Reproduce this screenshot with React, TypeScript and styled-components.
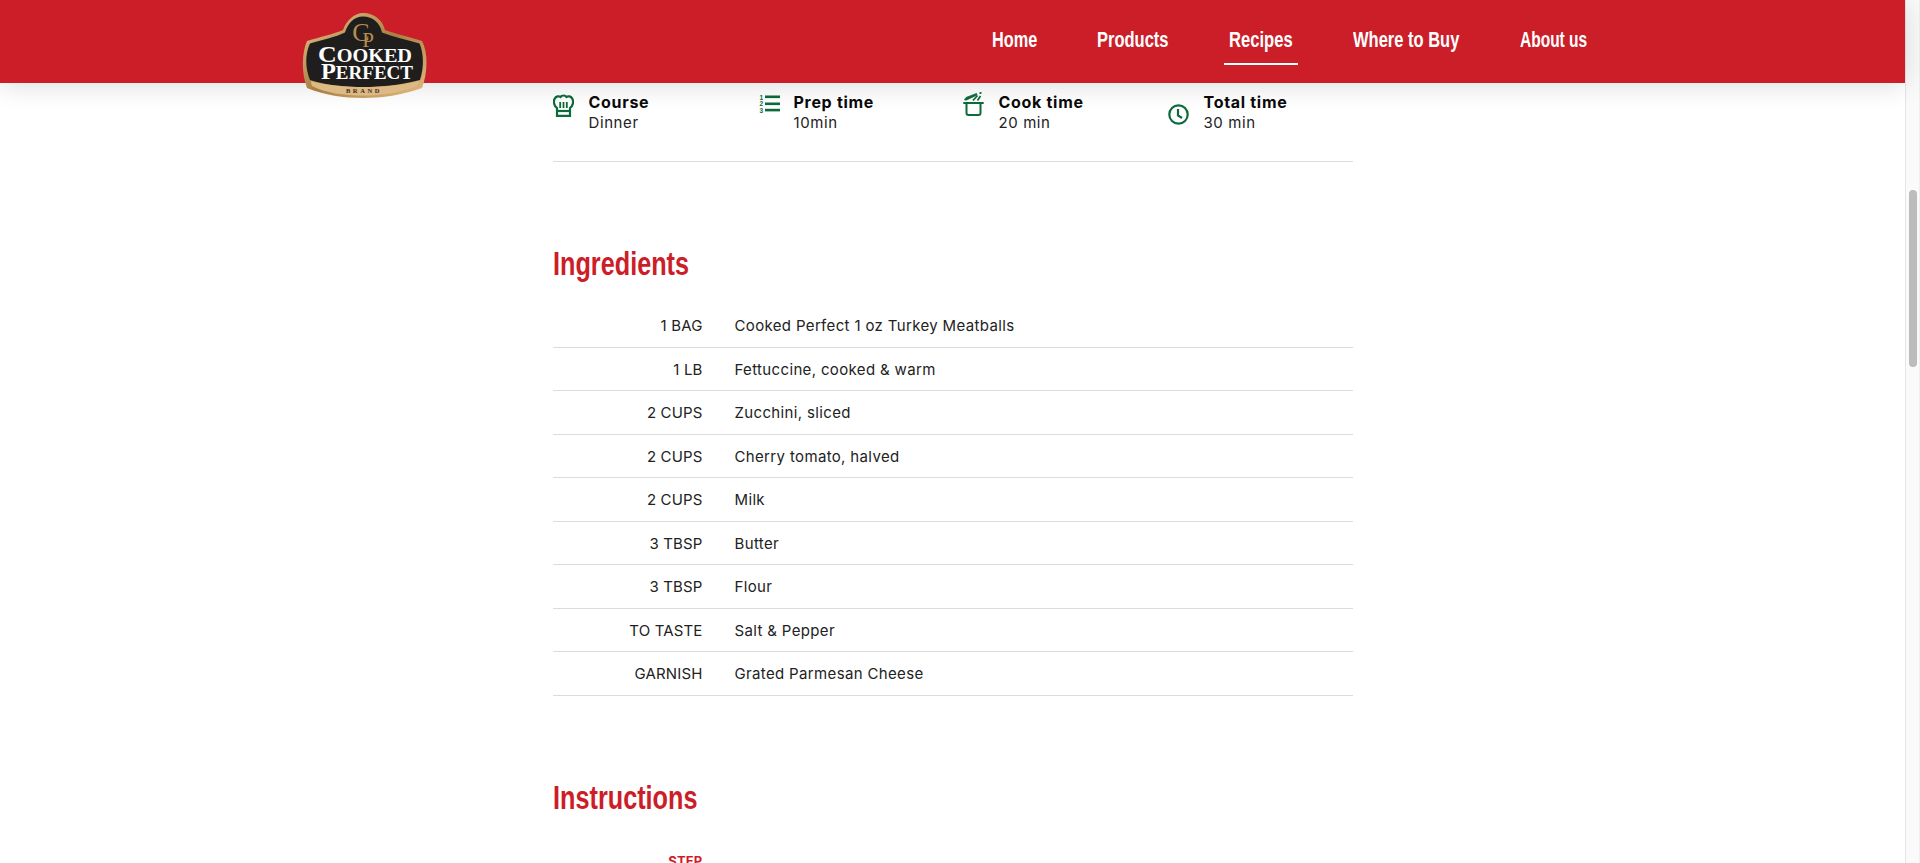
import React from "react";
import styled, { createGlobalStyle } from "styled-components";

const Global = createGlobalStyle`
  html, body { margin: 0; height: 100%; overflow: hidden; background: #fff; }
  #root { height: 100%; }
`;

const RED = "#cb1e28";
const GREEN = "#0d6b3b";
const CONDENSED = `"Liberation Sans", Arial, sans-serif`;
const BODY = `Inter, "Noto Sans", sans-serif`;
const SERIF = `"Liberation Serif", serif`;

const Viewport = styled.div`
  display: flex;
  height: 863px;
  overflow: hidden;
  color: #111;
  font-family: ${BODY};
`;
const Page = styled.div`
  flex: 1;
  min-width: 0;
  position: relative;
`;
const Rail = styled.div`
  width: 15px;
  box-sizing: border-box;
  padding: 190px 2px 0 3px;
  background: #fafafa;
  border-left: 1px solid #e6e6e6;
  border-right: 1px solid #efefef;
`;
const Thumb = styled.div`
  height: 177px;
  border-radius: 4px;
  background: #bcbcbc;
`;
const Header = styled.header`
  position: relative;
  z-index: 2;
  height: 83px;
  box-sizing: border-box;
  padding: 26px 313px 0 302px;
  display: flex;
  justify-content: flex-end;
  background: ${RED};
  box-shadow: 0 2px 28px rgba(0, 0, 0, 0.14);
`;
const LogoMark = styled.svg`
  position: absolute;
  left: 300px;
  top: 10px;
`;
const Nav = styled.nav`
  display: flex;
  gap: 50px;
  align-items: flex-start;
`;
const NavLink = styled.a<{ $active?: boolean; $width: number }>`
  display: block;
  width: ${(p) => p.$width}px;
  padding: 1px 5px 10px;
  border-bottom: 2px solid ${(p) => (p.$active ? "#fff" : "transparent")};
  color: #fff;
  font: 700 22px/26px ${CONDENSED};
  white-space: nowrap;
`;
const NavText = styled.span<{ $scale: number }>`
  display: inline-block;
  transform: scaleX(${(p) => p.$scale});
  transform-origin: left center;
`;
const Main = styled.main`
  width: 800px;
  margin: 0 auto;
`;
const Meta = styled.section`
  display: grid;
  grid-template-columns: repeat(4, 205px);
  padding: 9px 0 28px;
  border-bottom: 1px solid #dcdcdc;
`;
const MetaItem = styled.div`
  display: flex;
`;
const IconBox = styled.div<{ $top: number; $left: number }>`
  width: 36px;
  flex: none;
  padding: ${(p) => p.$top}px 0 0 ${(p) => p.$left}px;
  box-sizing: border-box;
  svg { display: block; }
`;
const MetaLabel = styled.div`
  font-size: 16px;
  font-weight: 700;
  line-height: 20px;
  letter-spacing: 0.7px;
  color: #0a0a0a;
`;
const MetaValue = styled.div`
  font-size: 15px;
  font-weight: 400;
  line-height: 21px;
  letter-spacing: 0.6px;
  color: #222;
`;
const Heading = styled.h2`
  margin: 78px 0 16.4px;
  color: ${RED};
  font: 700 33px/48px ${CONDENSED};
`;
const HeadingText = styled.span`
  display: inline-block;
  transform: scaleX(0.765);
  transform-origin: left center;
`;
const IngredientRow = styled.div`
  display: grid;
  grid-template-columns: 150px 1fr;
  column-gap: 32px;
  align-items: center;
  height: 43.5px;
  box-sizing: border-box;
  border-bottom: 1px solid #dcdcdc;
  font-size: 15px;
  color: #222;
`;
const Qty = styled.span`
  text-align: right;
  letter-spacing: 0.15px;
`;
const Name = styled.span`
  letter-spacing: 0.35px;
`;
const StepLabel = styled.div`
  width: 150px;
  margin-top: 31px;
  text-align: right;
  color: ${RED};
  font-size: 13px;
  font-weight: 700;
  line-height: 16px;
  letter-spacing: 0.2px;
`;

const ChefHat = () => (
  <svg width="21" height="23" viewBox="0 0 21 23" fill="none" stroke={GREEN} strokeWidth="2.2">
    <path d="M4 21.800V14C1.200 12 0.200 8 1.500 5 3 2 6 1.800 7.500 3 9 1 12 1 13.500 3 15 1.800 18 2 19.500 5 20.800 8 19.800 12 17 14V21.800Z" />
    <path d="M4 17H17" />
    <path d="M7.200 8V14M10.500 8V14M13.800 8V14" strokeWidth="1.800" />
  </svg>
);
const NumberedList = () => (
  <svg width="21" height="19" viewBox="0 0 21 19" fill={GREEN}>
    <rect x="6" y="1.500" width="15" height="2.600" />
    <rect x="6" y="8.500" width="15" height="2.600" />
    <rect x="6" y="14.800" width="15" height="2.600" />
    <text x="0.500" y="5.500" fontFamily={CONDENSED} fontWeight="700" fontSize="6.500">1</text>
    <text x="0.500" y="12" fontFamily={CONDENSED} fontWeight="700" fontSize="6.500">2</text>
    <text x="0.500" y="18.500" fontFamily={CONDENSED} fontWeight="700" fontSize="6.500">3</text>
  </svg>
);
const Pot = () => (
  <svg width="21" height="24" viewBox="0 0 21 24" fill="none" stroke={GREEN} strokeWidth="2">
    <path d="M3.500 11V21C3.500 22.200 4.200 23 5.500 23H15.500C16.800 23 17.500 22.200 17.500 21V11" />
    <path d="M0.300 11H20.700" />
    <path d="M1.500 8 3 5.500 13.500 1.500 14 3 3.500 8Z" fill={GREEN} strokeWidth="0.800" />
    <path d="M10 8.500 14.500 3.500M14.500 8.500 17.500 4M16.500 1.500 18.500 0.500" strokeWidth="1.700" />
  </svg>
);
const Clock = () => (
  <svg width="21" height="21" viewBox="0 0 21 21" fill="none" stroke={GREEN} strokeWidth="2.200">
    <circle cx="10.500" cy="10.500" r="9.200" />
    <path d="M10 5V11.500L14 14" />
  </svg>
);

const Logo = () => (
  <LogoMark width="130" height="92" viewBox="0 0 130 92">
    <defs>
      <linearGradient id="gold" x1="0" y1="0" x2="1" y2="1">
        <stop offset="0" stopColor="#e8c58c" />
        <stop offset="0.5" stopColor="#a97f43" />
        <stop offset="1" stopColor="#e3bd83" />
      </linearGradient>
    </defs>
    <path
      d="M63 3C75 3 83 11 85 20 96 24 110 27 122 31 128 42 128 62 122 78 102 85 82 88 63 88 44 88 24 85 7 78 1 62 2 42 7 31 20 27 34 24 43 20 46 11 54 3 63 3Z"
      fill="url(#gold)"
    />
    <path
      d="M63 6.500C73 6.500 80 13 82 22.500 94 27 108 30 119.500 33.500 124 44 124 58 120 70 100 75 82 77 63 77 45 77 26 75 10 70 5 58 5 44 10 33.500 21 30 36 27 45 22.500 48 13 54 6.500 63 6.500Z"
      fill="#1f1e1c"
    />
    <path d="M11 71C40 79 88 79 119 71 118.500 73 118 75 117 76 100 83 82 85.500 63 85.500 44 85.500 26 83 12 76 11.500 75 11 73 11 71Z" fill="#dcb985" />
    <text x="61" y="31" fontFamily={SERIF} fontSize="26" fill="#b98d4f" textAnchor="middle">C</text>
    <text x="68" y="37" fontFamily={SERIF} fontSize="21" fill="#b98d4f" textAnchor="middle">P</text>
    <text x="18" y="52" textLength="94" lengthAdjust="spacingAndGlyphs" fontFamily={SERIF} fontWeight="700" fill="#fff" fontSize="18">
      <tspan fontSize="23">C</tspan>OOKED
    </text>
    <text x="21" y="69" textLength="92" lengthAdjust="spacingAndGlyphs" fontFamily={SERIF} fontWeight="700" fill="#fff" fontSize="18">
      <tspan fontSize="23">P</tspan>ERFECT
    </text>
    <text x="64" y="83" textAnchor="middle" fontFamily={SERIF} fontWeight="700" fill="#3b2c17" fontSize="6.500" letterSpacing="2.600">BRAND</text>
  </LogoMark>
);

const meta = [
  { label: "Course", value: "Dinner", icon: <ChefHat />, top: 2, left: 0 },
  { label: "Prep time", value: "10min", icon: <NumberedList />, top: 2, left: 1 },
  { label: "Cook time", value: "20 min", icon: <Pot />, top: 0, left: 0 },
  { label: "Total time", value: "30 min", icon: <Clock />, top: 12, left: 0 },
];
const ingredients = [
  ["1 BAG", "Cooked Perfect 1 oz Turkey Meatballs"],
  ["1 LB", "Fettuccine, cooked & warm"],
  ["2 CUPS", "Zucchini, sliced"],
  ["2 CUPS", "Cherry tomato, halved"],
  ["2 CUPS", "Milk"],
  ["3 TBSP", "Butter"],
  ["3 TBSP", "Flour"],
  ["TO TASTE", "Salt & Pepper"],
  ["GARNISH", "Grated Parmesan Cheese"],
];
const links: [string, number, number][] = [
  ["Home", 45, 0.74],
  ["Products", 72, 0.75],
  ["Recipes", 64, 0.755],
  ["Where to Buy", 107, 0.75],
  ["About us", 67, 0.705],
];

export default function App() {
  return (
    <Viewport>
      <Global />
      <Page>
        <Header>
          <Logo />
          <Nav>
            {links.map(([l, w, s]) => (
              <NavLink key={l} $width={w} $active={l === "Recipes"}>
                <NavText $scale={s}>{l}</NavText>
              </NavLink>
            ))}
          </Nav>
        </Header>
        <Main>
          <Meta>
            {meta.map((m) => (
              <MetaItem key={m.label}>
                <IconBox $top={m.top} $left={m.left}>{m.icon}</IconBox>
                <div>
                  <MetaLabel>{m.label}</MetaLabel>
                  <MetaValue>{m.value}</MetaValue>
                </div>
              </MetaItem>
            ))}
          </Meta>
          <Heading><HeadingText>Ingredients</HeadingText></Heading>
          {ingredients.map(([q, n], i) => (
            <IngredientRow key={i}>
              <Qty>{q}</Qty>
              <Name>{n}</Name>
            </IngredientRow>
          ))}
          <Heading><HeadingText>Instructions</HeadingText></Heading>
          <StepLabel>STEP</StepLabel>
        </Main>
      </Page>
      <Rail><Thumb /></Rail>
    </Viewport>
  );
}
